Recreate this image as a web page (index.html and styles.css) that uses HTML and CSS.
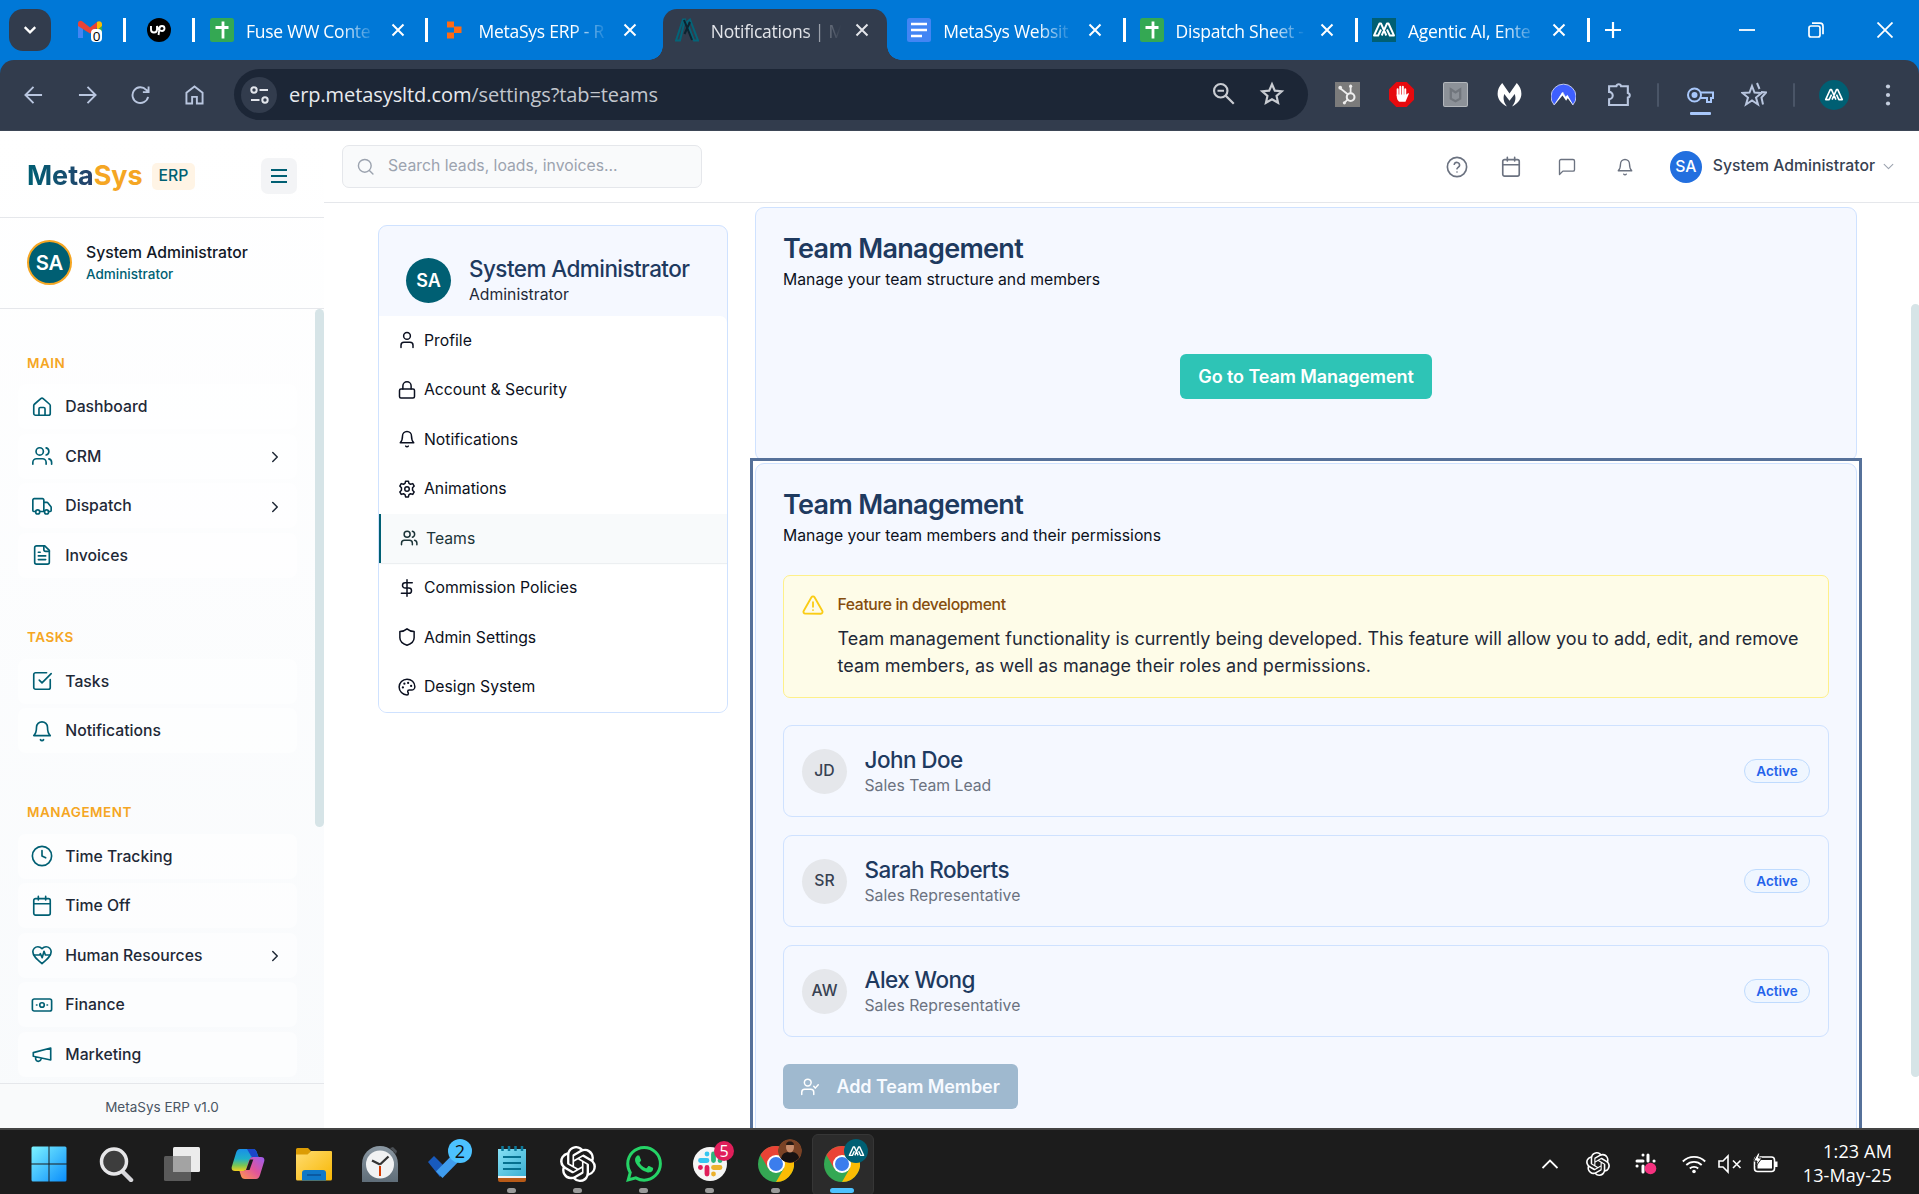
FILE: index.html
```html
<!DOCTYPE html>
<html lang="en">
<head>
<meta charset="utf-8">
<title>Notifications | MetaSys ERP</title>
<link rel="stylesheet" href="styles.css">
</head>
<body>
<svg class="defs" aria-hidden="true">
  <defs>
    <linearGradient id="gWin" x1="0" y1="0" x2="1" y2="1"><stop offset="0" stop-color="#7df3ff"/><stop offset="1" stop-color="#0a8dfb"/></linearGradient>
    <linearGradient id="gFolder" x1="0" y1="0" x2="1" y2="1"><stop offset="0" stop-color="#ffdc70"/><stop offset="1" stop-color="#f8b704"/></linearGradient>
    <linearGradient id="gCopA" x1="0" y1="0" x2="0" y2="1"><stop offset="0" stop-color="#1a8fe8"/><stop offset=".45" stop-color="#1fb0c8"/><stop offset=".75" stop-color="#7bc653"/><stop offset="1" stop-color="#f2cf1f"/></linearGradient>
    <linearGradient id="gCopB" x1="1" y1="0" x2="0" y2="1"><stop offset="0" stop-color="#9a5cf0"/><stop offset=".5" stop-color="#e0559b"/><stop offset="1" stop-color="#ff9a4a"/></linearGradient>
    <linearGradient id="gPad" x1="0" y1="0" x2="1" y2="1"><stop offset="0" stop-color="#86e0f5"/><stop offset="1" stop-color="#3bb0d3"/></linearGradient>
    <linearGradient id="gGrey" x1="0" y1="0" x2="0" y2="1"><stop offset="0" stop-color="#8b98a3"/><stop offset="1" stop-color="#5f6d78"/></linearGradient>
  </defs>
  <symbol id="x" viewBox="0 0 14 14"><path d="M1.5 1.5l11 11M12.500 1.500l-11 11" fill="none" stroke="currentColor" stroke-width="2"/></symbol>
  <symbol id="sheet" viewBox="0 0 24 24"><rect width="24" height="24" rx="2.500" fill="#34a853"/><path d="M13 3.500v17M5.500 9.500h13" stroke="#fff" stroke-width="2.800" fill="none"/></symbol>
  <symbol id="mlogo" viewBox="0 0 24 24"><path d="M9 11.500L6.200 17.500H2L7.500 5.500H9L14.300 17.500M15 11.500L17.800 17.500H22L16.500 5.500H15L9.700 17.500" fill="none" stroke="#fff" stroke-width="1.900" stroke-linejoin="round"/></symbol>
  <symbol id="home" viewBox="0 0 24 24"><path d="M3 10.500a2 2 0 0 1 .700-1.500l7-6.200a2 2 0 0 1 2.600 0l7 6.200a2 2 0 0 1 .700 1.500V19a2 2 0 0 1-2 2H5a2 2 0 0 1-2-2z"/><path d="M8.700 21v-7a1.500 1.500 0 0 1 1.500-1.500h3.600a1.500 1.500 0 0 1 1.500 1.500v7"/></symbol>
  <symbol id="users" viewBox="0 0 24 24"><path d="M16.500 21v-2a4 4 0 0 0-4-4H6a4 4 0 0 0-4 4v2"/><circle cx="9.500" cy="7" r="4"/><path d="M22.500 21v-2a4 4 0 0 0-3-3.870M16.500 3.130a4 4 0 0 1 0 7.750"/></symbol>
  <symbol id="truck" viewBox="0 0 24 24"><path d="M14 18V5.500A1.500 1.500 0 0 0 12.500 4h-9A1.500 1.500 0 0 0 2 5.500V17a1 1 0 0 0 1 1h2M9.500 18h5M19 18h2a1 1 0 0 0 1-1v-3.650a1 1 0 0 0-.220-.620l-3.480-4.350a1 1 0 0 0-.780-.380H14"/><circle cx="7.300" cy="18.500" r="2.200"/><circle cx="17" cy="18.500" r="2.200"/></symbol>
  <symbol id="file" viewBox="0 0 24 24"><path d="M15 2H6a2 2 0 0 0-2 2v16a2 2 0 0 0 2 2h12a2 2 0 0 0 2-2V7z"/><path d="M14 2v4a2 2 0 0 0 2 2h4M10 9H8M16 13H8M16 17H8"/></symbol>
  <symbol id="check" viewBox="0 0 24 24"><path d="M21 10.500V19a2 2 0 0 1-2 2H5a2 2 0 0 1-2-2V5a2 2 0 0 1 2-2h12M9 11l3 3L22 4"/></symbol>
  <symbol id="bell" viewBox="0 0 24 24"><path d="M10.300 21.500a2 2 0 0 0 3.400 0M6 8a6 6 0 0 1 12 0c0 5 1 7.200 3 9H3c2-1.800 3-4 3-9z"/></symbol>
  <symbol id="clock" viewBox="0 0 24 24"><circle cx="12" cy="12" r="10.500"/><path d="M12 6v6l4 2"/></symbol>
  <symbol id="cal" viewBox="0 0 24 24"><rect x="3" y="4" width="18" height="18" rx="2"/><path d="M8 1.500v4M16 1.500v4M3 9.500h18"/></symbol>
  <symbol id="heart" viewBox="0 0 24 24"><path d="M12 21.500C6 16.500 2 13 2 8.500A5.500 5.500 0 0 1 7.500 3c1.760 0 3 .500 4.500 2 1.500-1.500 2.740-2 4.500-2A5.500 5.500 0 0 1 22 8.500c0 4.500-4 8-10 13z"/><path d="M3.500 12H9.500l.700-1.500 2 4.500 2-7 1.500 4H20.500"/></symbol>
  <symbol id="cash" viewBox="0 0 24 24"><rect x="1.500" y="5.500" width="21" height="13" rx="2"/><circle cx="12" cy="12" r="2.500"/><path d="M6 12h.500M17.500 12h.500"/></symbol>
  <symbol id="mega" viewBox="0 0 24 24"><path d="M2.500 10.500L21.500 5.500v13L2.500 14.500zM11 16.800a3 3 0 1 1-5.500-1.500"/></symbol>
  <symbol id="chev" viewBox="0 0 24 24"><path d="M9 18l6-6-6-6"/></symbol>
  <symbol id="down" viewBox="0 0 24 24"><path d="M4 8l8 8 8-8"/></symbol>
  <symbol id="search" viewBox="0 0 24 24"><circle cx="11" cy="11" r="9"/><path d="M22.500 22.500l-5-5"/></symbol>
  <symbol id="help" viewBox="0 0 24 24"><circle cx="12" cy="12" r="10.500"/><path d="M9 9a3 3 0 0 1 5.830 1c0 2-2.830 2.500-2.830 4M12 17.500h.010"/></symbol>
  <symbol id="msg" viewBox="0 0 24 24"><path d="M22 15.500a2 2 0 0 1-2 2H6.500L2 22V4a2 2 0 0 1 2-2h16a2 2 0 0 1 2 2z"/></symbol>
  <symbol id="user" viewBox="0 0 24 24"><path d="M20 22v-3a4 4 0 0 0-4-4H8a4 4 0 0 0-4 4v3"/><circle cx="12" cy="6.500" r="4.500"/></symbol>
  <symbol id="lock" viewBox="0 0 24 24"><rect x="2" y="10.500" width="20" height="12" rx="2"/><path d="M6.500 10.500V6.500a5.500 5.500 0 0 1 11 0v4"/></symbol>
  <symbol id="gear" viewBox="0 0 24 24"><path d="M9.400 4.500l.700-3h3.800l.700 3 2.100 1.200 3-.900 1.900 3.300-2.200 2.200v3.400l2.200 2.200-1.900 3.300-3-.900-2.100 1.200-.700 3h-3.800l-.700-3-2.100-1.200-3 .900-1.900-3.300 2.200-2.200v-3.400L2.400 8.100l1.900-3.300 3 .900z"/><circle cx="12" cy="12" r="3"/></symbol>
  <symbol id="dollar" viewBox="0 0 24 24"><path d="M12 1v22M19 5H9.500a3.500 3.500 0 0 0 0 7h5a3.500 3.500 0 0 1 0 7H4.500"/></symbol>
  <symbol id="shield" viewBox="0 0 24 24"><path d="M12 23c-6-2-9.500-5-9.500-10V4.500C6 4.500 9.500 3.500 12 1.200c2.500 2.300 6 3.300 9.500 3.300V13c0 5-3.500 8-9.500 10z"/></symbol>
  <symbol id="palette" viewBox="0 0 24 24"><path d="M12 1.500a10.500 10.500 0 1 0 0 21c1.200 0 1.800-.900 1.800-1.900 0-1.100-.900-1.500-.900-2.600 0-1.200.900-2 2.100-2h3A4.500 4.500 0 0 0 22.500 11.500c0-5.500-4.700-10-10.500-10z"/><path d="M13.500 6.500h.010M17.500 10.500h.010M8.500 7.500h.010M6.500 12.500h.010" stroke-width="3"/></symbol>
  <symbol id="gpt" viewBox="0 0 24 24"><path fill="#fff" d="M22.2819 9.8211a5.9847 5.9847 0 0 0-.5157-4.9108 6.0462 6.0462 0 0 0-6.5098-2.9A6.0651 6.0651 0 0 0 4.9807 4.1818a5.9847 5.9847 0 0 0-3.9977 2.9 6.0462 6.0462 0 0 0 .7427 7.0966 5.98 5.98 0 0 0 .511 4.9107 6.051 6.051 0 0 0 6.5146 2.9001A5.9847 5.9847 0 0 0 13.2599 24a6.0557 6.0557 0 0 0 5.7718-4.2058 5.9894 5.9894 0 0 0 3.9977-2.9001 6.0557 6.0557 0 0 0-.7475-7.0729zm-9.022 12.6081a4.4755 4.4755 0 0 1-2.8764-1.0408l.1419-.0804 4.7783-2.7582a.7948.7948 0 0 0 .3927-.6813v-6.7369l2.02 1.1686a.071.071 0 0 1 .038.052v5.5826a4.504 4.504 0 0 1-4.4945 4.4944zm-9.6607-4.1254a4.4708 4.4708 0 0 1-.5346-3.0137l.142.0852 4.783 2.7582a.7712.7712 0 0 0 .7806 0l5.8428-3.3685v2.3324a.0804.0804 0 0 1-.0332.0615L9.74 19.9502a4.4992 4.4992 0 0 1-6.1408-1.6464zM2.3408 7.8956a4.485 4.485 0 0 1 2.3655-1.9728V11.6a.7664.7664 0 0 0 .3879.6765l5.8144 3.3543-2.0201 1.1685a.0757.0757 0 0 1-.071 0l-4.8303-2.7865A4.504 4.504 0 0 1 2.3408 7.872zm16.5963 3.8558L13.1038 8.364 15.1192 7.2a.0757.0757 0 0 1 .071 0l4.8303 2.7913a4.4944 4.4944 0 0 1-.6765 8.1042v-5.6772a.79.79 0 0 0-.407-.667zm2.0107-3.0231l-.142-.0852-4.7735-2.7818a.7759.7759 0 0 0-.7854 0L9.409 9.2297V6.8974a.0662.0662 0 0 1 .0284-.0615l4.8303-2.7866a4.4992 4.4992 0 0 1 6.6802 4.66zM8.3065 12.863l-2.02-1.1638a.0804.0804 0 0 1-.038-.0567V6.0742a4.4992 4.4992 0 0 1 7.3757-3.4537l-.142.0805L8.704 5.459a.7948.7948 0 0 0-.3927.6813zm1.0976-2.3654l2.602-1.4998 2.6069 1.4998v2.9994l-2.5974 1.4997-2.6067-1.4997Z"/></symbol>
  <symbol id="chrome" viewBox="0 0 36 36"><circle cx="18" cy="18" r="18" fill="#34a853"/><path d="M18 9h15.600A18 18 0 0 1 18 36l7.800-13.500z" fill="#fbbc04"/><path d="M2.400 9A18 18 0 0 1 33.600 9H18l-7.800 13.500z" fill="#ea4335"/><circle cx="18" cy="18" r="9" fill="#fff"/><circle cx="18" cy="18" r="7" fill="#3b7ded"/></symbol>
</svg>

<div class="tabstrip">
  <div class="tab-menu"><svg width="14" height="14" viewBox="0 0 24 24" fill="none" stroke="#fff" stroke-width="4"><path d="M3 7l9 9 9-9"/></svg></div>
  <div class="pinned"><svg width="24" height="24" viewBox="0 0 24 24"><path d="M0 6v14h5V9z" fill="#4285f4"/><path d="M19 9v11h5V6z" fill="#34a853"/><path d="M0 5.500C0 3 2.800 2 4.500 3.500L12 9.500l7.500-6v6L12 15.500 0 8z" fill="#ea4335"/><path d="M19 4c2-1.800 5-.500 5 2v2l-5 4z" fill="#fbbc04"/><rect x="13" y="11" width="11" height="13" rx="4" fill="#fff"/><text x="18.500" y="22.500" text-anchor="middle" font-family="Open Sans, sans-serif" font-size="13.500" fill="#000">0</text></svg></div>
  <div class="pinned"><svg width="24" height="24" viewBox="0 0 24 24"><circle cx="12" cy="12" r="12" fill="#000"/><path d="M4 8v3.500a3 3 0 0 0 6 0V8c1 3 2.500 5 5 5a2.500 2.500 0 1 0-2.500-2.500L11.500 17" fill="none" stroke="#fff" stroke-width="1.900"/></svg></div>
  <div class="tab"><svg class="fav"><use href="#sheet"/></svg><span class="tab-title">Fuse WW Conte</span><svg class="tab-x"><use href="#x"/></svg></div>
  <div class="tab nosep"><svg class="fav" viewBox="0 0 24 24"><path d="M5 3.500h7v6h-7zM12 8.500h7.500v6.500h-7.500zM5 14.500h7v6h-7z" fill="#ff6a13"/></svg><span class="tab-title">MetaSys ERP - R</span><svg class="tab-x"><use href="#x"/></svg></div>
  <div class="tab active"><svg class="fav" viewBox="0 0 24 24"><path d="M1 22.500L8 1.500h2L5 22.500zM12 4l3-2.500L23 22.500h-4z" fill="none" stroke="#046478" stroke-width="2"/><path d="M9 2l8 20M15 4L9.500 16" stroke="#0b2430" stroke-width="2" fill="none"/></svg><span class="tab-title">Notifications | M</span><svg class="tab-x"><use href="#x"/></svg></div>
  <div class="tab"><svg class="fav" viewBox="0 0 24 24"><rect width="24" height="24" rx="2.500" fill="#4285f4"/><path d="M4 6h16M4 12h16M4 18h11" stroke="#fff" stroke-width="2.700"/></svg><span class="tab-title">MetaSys Websit</span><svg class="tab-x"><use href="#x"/></svg></div>
  <div class="tab"><svg class="fav"><use href="#sheet"/></svg><span class="tab-title">Dispatch Sheet -</span><svg class="tab-x"><use href="#x"/></svg></div>
  <div class="tab"><svg class="fav teal"><use href="#mlogo"/></svg><span class="tab-title">Agentic AI, Ente</span><svg class="tab-x"><use href="#x"/></svg></div>
  <svg class="newtab" viewBox="0 0 16 16"><path d="M8 0v16M0 8h16" stroke="#fff" stroke-width="2.200"/></svg>
  <div class="winctl">
    <svg width="16" height="16"><path d="M0 8h16" stroke="#fff" stroke-width="1.800"/></svg>
    <svg width="16" height="16" viewBox="0 0 16 16" fill="none" stroke="#fff" stroke-width="1.700"><rect x="1" y="4" width="11" height="11" rx="2"/><path d="M4 1.200h8a3 3 0 0 1 3 3v8"/></svg>
    <svg width="16" height="16" viewBox="0 0 16 16"><path d="M.5.5l15 15M15.500.5l-15 15" stroke="#fff" stroke-width="1.800"/></svg>
  </div>
</div>

<div class="toolbar-wrap"><div class="toolbar">
  <div class="navs">
    <svg viewBox="0 0 20 20"><path d="M19 10H2M10 1.500L1.500 10l8.500 8.500"/></svg>
    <svg viewBox="0 0 20 20"><path d="M1 10h17M10 1.500l8.500 8.500-8.500 8.500"/></svg>
    <svg viewBox="0 0 20 20"><path d="M18 12a8.300 8.300 0 1 1-2-7.500L18.500 7M18.500 1v6h-6"/></svg>
    <svg viewBox="0 0 20 20"><path d="M1.500 19V7.500L10 1l8.500 6.500V19h-6v-7h-5v7z"/></svg>
  </div>
  <div class="omnibox">
    <div class="site"><svg width="19" height="18" viewBox="0 0 19 18" fill="none" stroke="#e3e6ec" stroke-width="2"><circle cx="4" cy="4" r="2.700"/><path d="M9.500 4H18M1 14h8.500"/><circle cx="15" cy="14" r="2.700"/></svg></div>
    <span class="url">erp.metasysltd.com<i>/settings?tab=teams</i></span>
    <svg class="omi" viewBox="0 0 24 24"><circle cx="9" cy="9" r="6.200"/><path d="M13.500 13.500l7.500 7.500M6 9h6"/></svg>
    <svg class="omi" viewBox="0 0 24 24"><path d="M12 3l2.600 5.900 6.400.600-4.800 4.300 1.400 6.300L12 16.800l-5.600 3.300 1.400-6.300L3 9.500l6.400-.600z"/></svg>
  </div>
  <div class="exts">
    <svg viewBox="0 0 24 24"><rect width="24" height="24" fill="#7b7b7b"/><path d="M5 6l7.500 6M15 4v7M12 17l-3 3" stroke="#eee" stroke-width="1.700"/><circle cx="15" cy="14.500" r="3.700" fill="none" stroke="#eee" stroke-width="2"/><circle cx="5" cy="5.500" r="1.800" fill="#eee"/><circle cx="15" cy="4" r="1.500" fill="#eee"/><circle cx="9" cy="20" r="1.500" fill="#eee"/></svg>
    <svg viewBox="0 0 24 24"><path d="M7 0h10l7 7v10l-7 7H7l-7-7V7z" fill="#e60a0e"/><path d="M8.300 13V7M10.800 12V4.500M13.300 12V4.500M15.600 13V7" stroke="#fff" stroke-width="1.900" stroke-linecap="round"/><path d="M7.400 12h9.200l2-1.500.500.800L15.800 19H10c-2-1.500-2.600-3-2.600-7z" fill="#fff"/></svg>
    <svg viewBox="0 0 24 24"><rect x=".500" y=".500" width="23" height="23" rx="1.500" fill="#8c9198" stroke="#b3b7bc"/><path d="M7.500 7l4.500 3 4.500-3v9L12 18.500 7.500 16z" fill="none" stroke="#71767d" stroke-width="2.200"/></svg>
    <svg viewBox="0 0 24 24"><path d="M5 1c-6.500 7-6.500 17 4.500 22.500C5.500 18.500 6 14.500 7 11.500L12 18l5-6.500c1 3 1.500 7-2.500 12C25.500 18 25.500 8 19 1l-7 10z" fill="#fff"/></svg>
    <svg viewBox="0 0 24 24"><path d="M3 22A12 12 0 1 1 21 22L16 13.500l-1.500 2L11.500 10z" fill="#3e5fff" stroke="#d8ddf5" stroke-width=".8"/><path d="M3 22.500L10.800 9.500l3.200 5 1.700-2.300L21.500 22.500l-5.500-7-1.500 2.500-3.500-5z" fill="#fff"/></svg>
    <svg class="puz" viewBox="0 0 24 24" fill="none" stroke="#b9c6df" stroke-width="2"><path d="M2 4h7a2.300 2.300 0 0 1 4.500 0H20v6.500a2.300 2.300 0 0 1 0 4.500v7H2v-5.500a3.500 3.500 0 0 0 0-7z"/></svg>
    <b class="vsep"></b>
    <span class="key"><svg viewBox="0 0 28 18" fill="none" stroke="#a8c7fa" stroke-width="2"><circle cx="8.500" cy="9" r="6.500"/><path d="M15 6.500h12v5.500h-2v4h-4v-4h-6"/><circle cx="8.500" cy="9" r="3" fill="#a8c7fa" stroke="none"/></svg></span>
    <svg class="star2" viewBox="0 0 26 26" fill="none" stroke="#b9c6df" stroke-width="2"><path d="M11 4l2.500 6.500 7 .500-5.500 4.500 2 7-6-4-6 4 2-7L1.500 11l7-.500zM16 1l2.500 6 M20 10l5 .500-4.500 5 1.500 7"/></svg>
    <b class="vsep"></b>
    <span class="prof"><svg width="20" height="20"><use href="#mlogo"/></svg></span>
    <svg class="dots" viewBox="0 0 6 24" fill="#c5cede"><circle cx="3" cy="3.500" r="2.100"/><circle cx="3" cy="12" r="2.100"/><circle cx="3" cy="20.500" r="2.100"/></svg>
  </div>
</div></div>

<div class="app">
  <aside class="side">
    <header class="brand"><span class="logo"><span class="meta">Meta</span><span class="sys">Sys</span></span><span class="erp">ERP</span><span class="burger"><svg width="18" height="18" viewBox="0 0 18 18" stroke="#005f73" stroke-width="1.900"><path d="M1 3h16M1 9h16M1 15h16"/></svg></span></header>
    <section class="me"><span class="ava gold">SA</span><div><p class="me-name">System Administrator</p><p class="me-role">Administrator</p></div></section>
    <nav class="nav">
      <h4>MAIN</h4>
      <a><svg><use href="#home"/></svg>Dashboard</a>
      <a><svg><use href="#users"/></svg>CRM<svg class="chev"><use href="#chev"/></svg></a>
      <a><svg><use href="#truck"/></svg>Dispatch<svg class="chev"><use href="#chev"/></svg></a>
      <a><svg><use href="#file"/></svg>Invoices</a>
      <h4>TASKS</h4>
      <a><svg><use href="#check"/></svg>Tasks</a>
      <a><svg><use href="#bell"/></svg>Notifications</a>
      <h4>MANAGEMENT</h4>
      <a><svg><use href="#clock"/></svg>Time Tracking</a>
      <a><svg><use href="#cal"/></svg>Time Off</a>
      <a><svg><use href="#heart"/></svg>Human Resources<svg class="chev"><use href="#chev"/></svg></a>
      <a><svg><use href="#cash"/></svg>Finance</a>
      <a><svg><use href="#mega"/></svg>Marketing</a>
      <i class="thumb side-thumb"></i>
    </nav>
    <footer class="ver">MetaSys ERP v1.0</footer>
  </aside>
  <div class="content">
    <header class="top">
      <div class="search"><svg width="17" height="17"><use href="#search"/></svg>Search leads, loads, invoices...</div>
      <div class="top-icons">
        <svg class="i22"><use href="#help"/></svg><svg class="i22"><use href="#cal"/></svg><svg class="i18"><use href="#msg"/></svg><svg class="i18"><use href="#bell"/></svg>
      </div>
      <div class="account"><span class="ava blue">SA</span><span>System Administrator</span><svg width="13" height="13"><use href="#down"/></svg></div>
    </header>
    <main class="main">
      <div class="settings">
        <div class="set-head"><span class="ava">SA</span><div><h3>System Administrator</h3><p>Administrator</p></div></div>
        <ul>
          <li><svg><use href="#user"/></svg>Profile</li>
          <li><svg><use href="#lock"/></svg>Account &amp; Security</li>
          <li><svg><use href="#bell"/></svg>Notifications</li>
          <li><svg><use href="#gear"/></svg>Animations</li>
          <li class="on"><svg><use href="#users"/></svg>Teams</li>
          <li><svg><use href="#dollar"/></svg>Commission Policies</li>
          <li><svg><use href="#shield"/></svg>Admin Settings</li>
          <li><svg><use href="#palette"/></svg>Design System</li>
        </ul>
      </div>
      <div class="panels">
        <section class="panel one"><h2>Team Management</h2><p class="sub">Manage your team structure and members</p><button class="go">Go to Team Management</button></section>
        <div class="focus"><section class="panel two"><h2>Team Management</h2><p class="sub">Manage your team members and their permissions</p>
          <div class="alert"><svg width="22" height="22" viewBox="0 0 24 24" fill="none" stroke="#facc15" stroke-width="2" stroke-linecap="round" stroke-linejoin="round"><path d="M10.300 3.500L1.800 18.500a2 2 0 0 0 1.700 3h17a2 2 0 0 0 1.700-3L13.700 3.500a2 2 0 0 0-3.400 0zM12 9v5M12 17.500h.010"/></svg><div><h5>Feature in development</h5><p>Team management functionality is currently being developed. This feature will allow you to add, edit, and remove team members, as well as manage their roles and permissions.</p></div></div>
          <div class="member"><span class="ava grey">JD</span><div><h3>John Doe</h3><p>Sales Team Lead</p></div><span class="pill">Active</span></div>
          <div class="member"><span class="ava grey">SR</span><div><h3>Sarah Roberts</h3><p>Sales Representative</p></div><span class="pill">Active</span></div>
          <div class="member"><span class="ava grey">AW</span><div><h3>Alex Wong</h3><p>Sales Representative</p></div><span class="pill">Active</span></div>
          <button class="add"><svg width="18" height="18" viewBox="0 0 24 24" fill="none" stroke="#fff" stroke-width="2" stroke-linecap="round" stroke-linejoin="round"><path d="M17 22v-3a4 4 0 0 0-4-4H5a4 4 0 0 0-4 4v3M17 11l2 2.500L23 9"/><circle cx="9" cy="6" r="4.500"/></svg>Add Team Member</button>
        </section></div>
      </div>
      <i class="thumb main-thumb"></i>
    </main>
  </div>
</div>

<div class="taskbar">
  <div class="apps">
    <div class="slot"><svg viewBox="0 0 36 36"><path d="M.500 2a1.500 1.500 0 0 1 1.500-1.500h15.500v17H.500zM18.500.500H34A1.500 1.500 0 0 1 35.500 2v15.500h-17zM.500 18.500h17v17H2A1.500 1.500 0 0 1 .500 34zM18.500 18.500h17V34a1.500 1.500 0 0 1-1.500 1.500H18.500z" fill="url(#gWin)"/></svg></div>
    <div class="slot"><svg viewBox="0 0 36 36"><path d="M25 26l8 8" stroke="#d6d6da" stroke-width="4.500" stroke-linecap="round"/><circle cx="16" cy="15.500" r="12.500" fill="#3d3d3d" stroke="#e6e6e8" stroke-width="3.500"/></svg></div>
    <div class="slot"><svg viewBox="0 0 36 36"><rect x="9" y="1" width="27" height="25" rx="1.500" fill="#ececec"/><rect y="10" width="27" height="25" rx="1.500" fill="#5a5a5a"/><path d="M9 10h18v16H9z" fill="#a3a3a3"/></svg></div>
    <div class="slot"><svg viewBox="0 0 36 36"><path d="M10 3h13c2 0 3 1 4 4l1.500 4h-5c-2 0-3 1-3.600 3l-2.500 8c-1 2-2 3-4 3H5c-3 0-4-2-3-5L6 7c.800-2.500 2-4 4-4z" fill="url(#gCopA)"/><path d="M17 3h6c2 0 3 1 4 4l1.500 4h-5c-2 0-2.500-.500-3-2z" fill="#1b46c9"/><path d="M26 33H15c-2 0-3.500-1-4.300-4L9.500 25H13c2 0 3-1 3.600-3l2.500-8c1-2 2-3 4-3H31c3 0 4 2 3 5l-4 13c-.800 2.500-2 4-4 4z" fill="url(#gCopB)"/><path d="M19.800 13.500h3.500l-3.800 10.500h-3.500z" fill="#1c1c1c"/></svg></div>
    <div class="slot"><svg viewBox="0 0 36 36"><path d="M0 3.500A1.500 1.500 0 0 1 1.500 2H12l3 3-3 4H0z" fill="#dc9c04"/><path d="M0 8.500h11.500L15 5h20a1 1 0 0 1 1 1v27a1.500 1.500 0 0 1-1.500 1.500h-33A1.500 1.500 0 0 1 0 33z" fill="url(#gFolder)"/><path d="M6 34.500V27a3 3 0 0 1 3-3h18a3 3 0 0 1 3 3v7.500z" fill="#0f78c8"/><path d="M11 29h14" stroke="#0a4f94" stroke-width="1.500"/></svg></div>
    <div class="slot"><svg viewBox="0 0 36 36"><path d="M28 2l3-1 4 4-1 3z" fill="#4a4f54"/><path d="M0 18a18 18 0 0 1 36 0v18H0z" fill="url(#gGrey)"/><circle cx="18" cy="18.500" r="14" fill="#f1f2f3"/><path d="M18 18.500l-8-4M18 18.500l8.500-8" stroke="#333" stroke-width="2.300"/><path d="M18 20v10" stroke="#d83b01" stroke-width="2"/></svg></div>
    <div class="slot"><svg viewBox="0 0 36 36"><path d="M0 16l6-6 12 12-6 9z" fill="#185abd"/><path d="M14.500 32l-6.500-6.500L29 4l6.500 6.500z" fill="#3f9ced"/></svg><span class="bdg b2">2</span></div>
    <div class="slot run"><svg viewBox="0 0 36 36"><path d="M4 30h28v4a2 2 0 0 1-2 2H6a2 2 0 0 1-2-2z" fill="#b85a17"/><path d="M4 28h28v4H4z" fill="#f2f2f2"/><path d="M4 3h28v27H4z" fill="url(#gPad)"/><path d="M9 11h18M9 17h18M9 23h18" stroke="#06708f" stroke-width="1.800"/><path d="M8.500 0v5M15 0v5M21.500 0v5M28 0v5" stroke="#0c7a9b" stroke-width="2.500"/></svg></div>
    <div class="slot run"><svg><use href="#gpt"/></svg></div>
    <div class="slot run"><svg viewBox="0 0 24 24"><path fill="#25d366" d="M17.472 14.382c-.297-.149-1.758-.867-2.03-.967-.273-.099-.471-.148-.67.15-.197.297-.767.966-.94 1.164-.173.199-.347.223-.644.075-.297-.15-1.255-.463-2.39-1.475-.883-.788-1.48-1.761-1.653-2.059-.173-.297-.018-.458.13-.606.134-.133.298-.347.446-.52.149-.174.198-.298.298-.497.099-.198.05-.371-.025-.52-.075-.149-.669-1.612-.916-2.207-.242-.579-.487-.5-.669-.51-.173-.008-.371-.01-.57-.01-.198 0-.52.074-.792.372-.272.297-1.04 1.016-1.04 2.479 0 1.462 1.065 2.875 1.213 3.074.149.198 2.096 3.2 5.077 4.487.709.306 1.262.489 1.694.625.712.227 1.36.195 1.871.118.571-.085 1.758-.719 2.006-1.413.248-.694.248-1.289.173-1.413-.074-.124-.272-.198-.57-.347m-5.421 7.403h-.004a9.87 9.87 0 01-5.031-1.378l-.361-.214-3.741.982.998-3.648-.235-.374a9.86 9.86 0 01-1.51-5.26c.001-5.45 4.436-9.884 9.888-9.884 2.64 0 5.122 1.03 6.988 2.898a9.825 9.825 0 012.893 6.994c-.003 5.45-4.437 9.884-9.885 9.884m8.413-18.297A11.815 11.815 0 0012.05 0C5.495 0 .16 5.335.157 11.892c0 2.096.547 4.142 1.588 5.945L.057 24l6.305-1.654a11.882 11.882 0 005.683 1.448h.005c6.554 0 11.89-5.335 11.893-11.893a11.821 11.821 0 00-3.48-8.413Z"/></svg></div>
    <div class="slot run"><svg viewBox="0 0 36 36" fill="none" stroke-width="4.800" stroke-linecap="round"><circle cx="18" cy="18" r="17" fill="#f5f5f5"/><path d="M8.500 14.500H15M15 8v.100" stroke="#36c5f0"/><path d="M21.500 8v6.500M28 14.500h.100" stroke="#2eb67d"/><path d="M21.500 21.500H28M21.500 28v-.100" stroke="#ecb22e"/><path d="M15 21.500V28M8.500 21.500h-.100" stroke="#e01e5a"/></svg><span class="bdg b5">5</span></div>
    <div class="slot run"><svg><use href="#chrome"/></svg><svg class="bdg face" viewBox="0 0 24 24"><circle cx="12" cy="12" r="12" fill="#7a4225"/><path d="M3 20c1-6 4-7 9-7s8 1 9 6a12 12 0 0 1-18 1z" fill="#171212"/><ellipse cx="12" cy="8" rx="4" ry="5.500" fill="#c98d6c"/><path d="M8 6c0-5 8-5 8 0z" fill="#241712"/></svg></div>
    <div class="slot run now"><svg><use href="#chrome"/></svg><span class="bdg bm"><svg width="17" height="17"><use href="#mlogo"/></svg></span></div>
  </div>
  <div class="tray">
    <svg width="16" height="10" viewBox="0 0 16 10" fill="none" stroke="#fff" stroke-width="1.800"><path d="M.500 9L8 1.500 15.500 9"/></svg>
    <svg class="t-gpt" width="24" height="24"><use href="#gpt"/></svg>
    <svg class="t-slack" width="22" height="22" viewBox="0 0 22 22"><path d="M2 8h6M8 2v.100M13 2v6M19 8h.100M8 13v6M2 13h.100M13 13h5" stroke="#fff" stroke-width="3" stroke-linecap="round"/><circle cx="15.500" cy="15.500" r="5.800" fill="#f5317f"/></svg>
    <svg class="t-wifi" width="24" height="20" viewBox="0 0 24 20" fill="none" stroke="#fff" stroke-width="1.800"><path d="M.800 7.500a16 16 0 0 1 22.400 0M4.300 11a11 11 0 0 1 15.400 0M7.800 14.500a6 6 0 0 1 8.400 0"/><circle cx="12" cy="17.500" r="1.800" fill="#fff" stroke="none"/></svg>
    <svg class="t-snd" width="24" height="20" viewBox="0 0 24 20" fill="none" stroke="#fff" stroke-width="1.600"><path d="M1 7h4l5-5v16l-5-5H1zM15 6.500l7.500 7.500M22.500 6.500L15 14"/></svg>
    <svg class="t-bat" width="25" height="22" viewBox="0 0 25 22"><rect x="1.500" y="4" width="20" height="14.500" rx="3" fill="none" stroke="#fff" stroke-width="1.600"/><path d="M4.500 7H19v8.500H4.500z" fill="#fff"/><path d="M22 8.500h2.500v5.500H22z" fill="#fff"/><path d="M5 0L.500 8H4L3 13l6-8H5.500L7 0z" fill="#fff" stroke="#1c1c1c" stroke-width="1"/></svg>
    <div class="time"><p>1:23 AM</p><p>13-May-25</p></div>
  </div>
</div>
</body>
</html>
```

FILE: styles.css
```css
* { box-sizing: border-box; margin: 0; padding: 0; }
body { width: 1919px; height: 1194px; overflow: hidden; font-family: Inter, "Liberation Sans", sans-serif; background: #fff; display: flex; flex-direction: column; }
svg { display: block; flex: none; }
i { font-style: normal; }
.defs { position: absolute; width: 0; height: 0; }

/* browser tab strip */
.tabstrip { height: 60px; flex: none; background: #0078d7; display: flex; align-items: center; color: #fff; font-family: "Open Sans", sans-serif; }
.tab-menu { width: 42px; height: 42px; border-radius: 14px; background: #323c4d; margin: 0 9px; display: flex; align-items: center; justify-content: center; }
.pinned { width: 69px; height: 24px; padding-left: 18px; border-right: 0; position: relative; }
.pinned::after, .tab::after { content: ""; position: absolute; right: 3px; top: 0; width: 3px; height: 24px; background: #fff; }
.tab { width: 232.400px; height: 24px; padding-left: 12px; display: flex; align-items: center; position: relative; }
.tab::after { right: 2px; }
.fav { width: 24px; height: 24px; margin-right: 12px; }
.teal { background: #005f73; }
.tab-title { width: 130px; height: 26px; line-height: 26px; padding-top: 1px; font-size: 17.500px; letter-spacing: -.25px; white-space: nowrap; -webkit-mask-image: linear-gradient(90deg, #000 72%, transparent 100%); mask-image: linear-gradient(90deg, #000 72%, transparent 100%); }
.tab-x { width: 14px; height: 14px; margin-left: 14.500px; }
.tab.nosep::after { display: none; }
.tab.active { height: 51px; align-self: flex-end; width: 224px; margin-right: 8.400px; background: #323c4d; border-radius: 14px 14px 0 0; color: #e3e5ea; }
.tab.active > * { transform: translateY(-5px); }
.tab.active::before { content: ""; position: absolute; left: -14px; bottom: 0; width: 14px; height: 14px; background: radial-gradient(circle at 0 0, transparent 13.500px, #323c4d 14px); transform: none; }
.tab.active::after { right: -14px; top: auto; bottom: 0; width: 14px; height: 14px; background: radial-gradient(circle at 100% 0, transparent 13.500px, #323c4d 14px); }
.newtab { width: 16px; height: 16px; margin-left: 13px; }
.winctl { margin-left: auto; margin-right: 26px; display: flex; gap: 53px; }

/* browser toolbar */
.toolbar-wrap { background: #0078d7; height: 71px; flex: none; }
.toolbar { height: 71px; background: #323c4d; border-radius: 14px 14px 0 0; border-bottom: 1px solid #3d4656; padding: 9px 28px 10px 24px; display: flex; align-items: center; }
.navs { display: flex; gap: 34.700px; width: 210px; flex: none; }
.navs svg { width: 19px; height: 20px; fill: none; stroke: #b9c6df; stroke-width: 2; }
.omnibox { width: 1074px; height: 51px; border-radius: 26px; background: #1c2636; display: flex; align-items: center; padding: 0 23px 0 7px; flex: none; }
.site { width: 36px; height: 36px; border-radius: 50%; background: #323c4d; display: flex; align-items: center; justify-content: center; margin-right: 12px; }
.url { flex: 1; color: #e8eaee; font: 20px/30px "Open Sans", sans-serif; letter-spacing: -.08px; }
.url i { color: #c3c7ce; }
.omi { width: 26px; height: 26px; fill: none; stroke: #c9ccd2; stroke-width: 2; margin-left: 22px; margin-bottom: 2px; }
.exts { display: flex; align-items: center; flex: 1; padding-left: 27px; }
.exts > svg { width: 25px; height: 25px; margin-right: 29px; }
.exts > .puz { width: 27px; margin-left: 1px; }
.vsep { width: 2px; height: 24px; border-radius: 1px; background: #4a5567; margin-right: 27px; margin-left: -5px; }
.key { width: 28px; height: 40px; display: flex; align-items: center; margin-right: 27px; padding-top: 1px; position: relative; }
.key::after { content: ""; position: absolute; left: 4px; bottom: 0; width: 21px; height: 3px; border-radius: 1px; background: #a8c7fa; }
.key svg { width: 28px; height: 18px; }
.exts > .star2 { width: 26px; height: 26px; margin-right: 31px; }
.exts .vsep + .prof { margin-left: -3px; }
.prof { width: 30px; height: 30px; border-radius: 50%; background: #005f73; display: flex; align-items: center; justify-content: center; flex: none; }
.exts > .dots { width: 6px; height: 24px; margin: 0 0 0 36px; }

/* application shell */
.app { height: 997px; flex: none; display: flex; }
.side { width: 324px; flex: none; display: flex; flex-direction: column; background: linear-gradient(#fff, #f8fafc); }
.brand { height: 87px; border-bottom: 1px solid #e5e7eb; display: flex; align-items: center; padding: 4px 27px 0; flex: none; }
.logo { font-size: 27px; font-weight: 700; letter-spacing: -.05px; width: 125px; white-space: nowrap; margin-top: -2px; }
.meta { background: linear-gradient(90deg, #005f73, #26406b); -webkit-background-clip: text; background-clip: text; color: transparent; }
.sys { color: #f5a623; }
.erp { width: 43px; height: 27px; border-radius: 5px; background: #fff4e5; color: #005f73; font-size: 15.750px; font-weight: 500; line-height: 26px; text-align: center; }
.burger { margin-left: auto; width: 36px; height: 36px; border-radius: 7px; background: #f3f4f6; display: flex; align-items: center; justify-content: center; }
.me { height: 91px; flex: none; border-bottom: 1px solid #e5e7eb; padding: 0 27px 1px; display: flex; align-items: center; gap: 14px; }
.ava { width: 45px; height: 45px; flex: none; border-radius: 50%; background: #005f73; color: #fff; display: flex; align-items: center; justify-content: center; font-size: 18px; font-weight: 600; }
.ava.gold { border: 2px solid #f5a623; font-size: 20.250px; }
.me-name { font-size: 15.750px; line-height: 22px; font-weight: 500; color: #111827; letter-spacing: -.02px; }
.me-role { font-size: 13.500px; line-height: 20px; font-weight: 500; color: #005f73; }
.nav { height: 774px; flex: none; padding: 44px 27px 0 18px; position: relative; overflow: hidden; }
.nav h4 { font-size: 13.500px; line-height: 20px; font-weight: 600; color: #f5a623; letter-spacing: .5px; padding-left: 9px; margin-bottom: 11.400px; }
.nav a + h4 { margin-top: 49.300px; }
.nav a { height: 45px; margin-bottom: 4.500px; border-radius: 7px; background: rgba(255,255,255,.5); display: flex; align-items: center; padding-left: 13px; font-size: 15.750px; font-weight: 500; color: #1f2937; }
.nav a svg { width: 22px; height: 22px; margin-right: 12.300px; }
.nav svg { fill: none; stroke: #005f73; stroke-width: 1.800; stroke-linecap: round; stroke-linejoin: round; }
.nav a .chev { width: 18px; height: 18px; margin: 2px 13px 0 auto; stroke: #1f2937; stroke-width: 2; }
.thumb { position: absolute; background: #d6e4e7; border-radius: 5px; }
.side-thumb { right: 0; top: 0; width: 9px; height: 518px; }
.main-thumb { right: -1px; top: 101px; width: 9px; height: 773px; }
.ver { flex: 1; border-top: 1px solid #e5e7eb; background: #f9fafb; display: flex; align-items: center; justify-content: center; font-size: 13.500px; color: #4b5563; padding-top: 1px; }

.content { flex: 1; display: flex; flex-direction: column; }
.top { height: 72px; flex: none; border-bottom: 1px solid #e5e7eb; display: flex; align-items: center; padding: 0 24px 0 18px; }
.search { width: 360px; height: 43px; border: 1px solid #e5e7eb; border-radius: 7px; background: #f9fafb; display: flex; align-items: center; gap: 14px; padding: 0 0 2px 14px; font-size: 15.750px; color: #9ca3af; }
.search svg, .top-icons svg, .account svg { fill: none; stroke: #6b7280; stroke-width: 1.800; stroke-linecap: round; stroke-linejoin: round; }
.search svg, .account svg { stroke: #9ca3af; stroke-width: 2; }
.search svg { margin-top: 2px; }
.top-icons { margin-left: auto; display: flex; align-items: center; }
.i22 { width: 22px; height: 22px; margin-right: 32px; }
.i18 { width: 18px; height: 18px; margin: 0 39px 0 4px; }
.i18 + .i18 { margin-left: 1px; margin-right: 36px; }
.account { display: flex; align-items: center; font-size: 15.750px; font-weight: 500; color: #374151; }
.account span + span { padding-bottom: 2px; }
.ava.blue { width: 32px; height: 32px; background: #226fdf; font-size: 15.750px; margin-right: 11px; font-weight: 500; }
.account svg { margin-left: 7px; }

.main { height: 925px; position: relative; overflow: hidden; padding: 4px 62px 0 54px; display: flex; }
.settings { width: 350px; height: 488px; flex: none; margin: 18px 27px 0 0; border: 1px solid #cfe2ff; border-radius: 9px; background: #f5f8ff; overflow: hidden; }
.set-head { height: 90px; display: flex; align-items: center; padding: 19px 0 0 27px; gap: 18px; }
.set-head h3, .member h3 { font-size: 22.500px; line-height: 27px; font-weight: 500; color: #1e3a5f; letter-spacing: -.5625px; }
.set-head p { font-size: 15.750px; line-height: 24px; color: #1f2937; padding-top: 1px; }
.settings ul { list-style: none; background: #fff; border-radius: 0 7px 7px 0; margin-top: -.4px; }
.settings li { height: 49.500px; display: flex; align-items: center; padding-left: 18.500px; gap: 8.500px; font-size: 15.750px; color: #0b1020; }
.settings li svg { width: 18px; height: 18px; fill: none; stroke: currentColor; stroke-width: 2; stroke-linecap: round; stroke-linejoin: round; }
.settings li.on { background: #f8fafb; border-left: 2px solid #005f73; color: #1c3438; box-shadow: 0 1px 1px #eceff1; }

.panels { flex: 1; }
.panel { background: #f5f8ff; border: 1px solid #cfe2ff; border-radius: 9px; padding: 0 27px; }
.panel h2 { font-size: 27px; line-height: 36px; font-weight: 600; color: #1e3a5f; letter-spacing: -.675px; }
.sub { font-size: 15.750px; line-height: 24px; color: #0b1020; }
.one { height: 254px; padding-top: 23px; }
.one .sub, .two .sub { margin-top: 1px; }
.go { display: block; margin: 62px auto 0; width: 252px; height: 45px; border: 0; border-radius: 6px; background: #2ec4b6; color: #fff; font: 600 18px Inter, sans-serif; letter-spacing: -.1px; white-space: nowrap; }
.focus { margin-top: 2px; outline: 3px solid #56719a; outline-offset: 2px; background: #fff; position: relative; }
.two { height: 700px; padding-top: 23px; }
.alert { margin-top: 27px; height: 123px; border: 1px solid #fef08a; border-radius: 7px; background: #fefce8; padding: 17px 0 0 18px; display: flex; gap: 13.500px; }
.alert h5 { font-size: 15.750px; line-height: 24px; font-weight: 500; color: #854d0e; letter-spacing: -.394px; margin-bottom: 8px; }
.alert p { font-size: 18px; line-height: 27px; color: #1f2937; width: 975px; }
.alert svg { margin-top: 1px; }
.member { height: 92px; margin-top: 18px; border: 1px solid #cfe2ff; border-radius: 9px; display: flex; align-items: center; padding: 0 18px; gap: 17.500px; }
.alert + .member { margin-top: 27px; }
.member h3 { margin-top: 2px; }
.member p { font-size: 15.750px; line-height: 24px; color: #6b7280; padding-top: 1px; }
.ava.grey { background: #e5e7eb; color: #374151; font-size: 15.750px; font-weight: 500; padding-bottom: 1px; }
.pill { margin-left: auto; width: 66px; height: 24px; border: 1px solid #bfdbfe; border-radius: 12px; background: #eff6ff; color: #2563eb; font-size: 13.500px; font-weight: 600; line-height: 22px; text-align: center; }
.add { margin-top: 27px; width: 235px; height: 45px; border: 0; border-radius: 6px; background: #9fb9cf; color: #f7faff; font: 600 18px Inter, sans-serif; letter-spacing: -.1px; display: flex; align-items: center; padding-left: 18px; gap: 17.500px; white-space: nowrap; }

/* desktop taskbar */
.taskbar { height: 66px; flex: none; background: #1c1c1c; border-top: 2px solid #444; display: flex; justify-content: space-between; position: relative; }
.apps { display: flex; padding-left: 17px; }
.slot { width: 66px; height: 64px; position: relative; padding: 16px 15px 0; }
.slot > svg { width: 36px; height: 36px; }
.slot:first-child { padding-left: 14px; }
.run::after { content: ""; position: absolute; left: 28px; bottom: 1px; width: 9px; height: 5px; border-radius: 3px; background: #9a9a9a; }
.now::before { content: ""; position: absolute; left: 3px; top: 4px; width: 60px; height: 60px; border-radius: 6px; background: #2b2b2b; border: 1px solid #363636; }
.now > svg { position: relative; }
.now::after { left: 21px; width: 24px; background: #4cc2ff; }
.slot > .bdg { position: absolute; left: 35px; top: 9px; width: 24px; height: 24px; border-radius: 50%; text-align: center; font: 18px/24px "Open Sans", sans-serif; }
.b2 { background: #4cc2ff; color: #111; }
.slot > .b5 { background: #e01e5a; color: #fff; width: 20px; height: 20px; line-height: 20px; left: 37px; top: 11px; font-size: 16px; }
.bm { background: #005f73; display: flex; align-items: center; justify-content: center; }
.tray { display: flex; align-items: center; padding: 4px 27px 0 0; color: #fff; }
.t-gpt { margin-left: 28px; }
.t-slack { margin-left: 25px; }
.t-wifi { margin-left: 25px; }
.t-snd { margin-left: 12px; }
.t-bat { margin-left: 11px; }
.time { width: 114px; text-align: right; font: 18px/24px "Open Sans", sans-serif; letter-spacing: .15px; margin-top: -3px; }
```
